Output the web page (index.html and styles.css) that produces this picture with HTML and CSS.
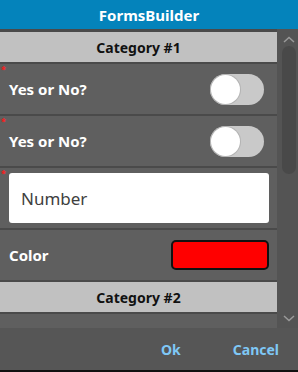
FILE: index.html
```html
<!DOCTYPE html>
<html>
<head>
<meta charset="utf-8">
<link rel="stylesheet" href="styles.css">
</head>
<body>
<div class="app">
  <header class="titlebar">FormsBuilder</header>
  <main class="body">
    <div class="content">
      <div class="category">Category #1</div>
      <div class="row">
        <span class="req">*</span>
        <span class="label">Yes or No?</span>
        <span class="toggle"><span class="knob"></span></span>
      </div>
      <div class="row">
        <span class="req">*</span>
        <span class="label">Yes or No?</span>
        <span class="toggle"><span class="knob"></span></span>
      </div>
      <div class="row row-input">
        <span class="req">*</span>
        <div class="input">Number</div>
      </div>
      <div class="row row-color">
        <span class="label">Color</span>
        <span class="swatch"></span>
      </div>
      <div class="category">Category #2</div>
      <div class="rest"></div>
    </div>
    <div class="scrollbar">
      <svg class="arrow" width="12" height="7" viewBox="0 0 12 7"><path d="M1 6 L6 1.5 L11 6" fill="none" stroke="#9a9a9a" stroke-width="1.5"/></svg>
      <div class="track"><div class="thumb"></div></div>
      <svg class="arrow" width="12" height="7" viewBox="0 0 12 7"><path d="M1 1 L6 5.5 L11 1" fill="none" stroke="#9a9a9a" stroke-width="1.5"/></svg>
    </div>
  </main>
  <footer class="footer">
    <span class="btn btn-ok">Ok</span>
    <span class="btn btn-cancel">Cancel</span>
  </footer>
</div>
</body>
</html>
```
FILE: styles.css
```css
html, body {
  margin: 0;
  padding: 0;
  background: #565656;
}
.app {
  width: 298px;
  height: 372px;
  display: flex;
  flex-direction: column;
  font-family: "Noto Sans", "Open Sans", sans-serif;
}
.titlebar {
  height: 29px;
  background: #0483bb;
  color: #ffffff;
  font-weight: bold;
  font-size: 15px;
  display: flex;
  align-items: center;
  justify-content: center;
}
.body {
  height: 299px;
  display: flex;
}
.content {
  width: 277px;
  background: #4a4a4a;
  padding-top: 3px;
  display: flex;
  flex-direction: column;
  gap: 2px;
  box-sizing: border-box;
}
.category {
  height: 30px;
  background: #c1c1c1;
  color: #111111;
  font-weight: bold;
  font-size: 14px;
  display: flex;
  align-items: center;
  justify-content: center;
}
.row {
  position: relative;
  height: 50px;
  background: #5f5f5f;
  display: flex;
  align-items: center;
  justify-content: space-between;
  padding: 0 13px 0 9px;
}
.req {
  position: absolute;
  left: 1px;
  top: 1px;
  color: #ff1a1a;
  font-size: 9px;
  font-weight: bold;
  line-height: 9px;
}
.label {
  color: #ffffff;
  font-weight: bold;
  font-size: 15px;
}
.toggle {
  width: 54px;
  height: 31px;
  border-radius: 16px;
  background: #c9c9c9;
  display: flex;
  align-items: center;
  padding-left: 1px;
  box-sizing: border-box;
}
.knob {
  width: 29px;
  height: 29px;
  border-radius: 50%;
  background: #ffffff;
  box-shadow: 0 0 0 1px #b4b4b4;
}
.row-input {
  height: 60px;
  padding: 0 8px 0 9px;
}
.input {
  flex: 1;
  height: 50px;
  background: #ffffff;
  border-radius: 3px;
  color: #404040;
  font-size: 17px;
  display: flex;
  align-items: center;
  padding-left: 12px;
}
.row-color {
  padding: 0 8px 0 9px;
}
.swatch {
  width: 98px;
  height: 30px;
  box-sizing: border-box;
  border: 2px solid #111111;
  border-radius: 5px;
  background: #ff0000;
}
.rest {
  flex: 1;
  background: #5f5f5f;
}
.scrollbar {
  width: 21px;
  background: #545454;
  display: flex;
  flex-direction: column;
  align-items: center;
  padding-top: 7px;
  box-sizing: border-box;
}
.arrow {
  flex: none;
  margin-left: 2px;
}
.track {
  height: 272px;
  width: 100%;
  padding-top: 3px;
  box-sizing: border-box;
  display: flex;
  justify-content: center;
}
.thumb {
  width: 14px;
  height: 128px;
  border-radius: 7px;
  background: #494949;
  margin-left: 2px;
}
.footer {
  height: 44px;
  background: #565656;
  border-bottom: 2px solid #111111;
  box-sizing: border-box;
  display: flex;
  align-items: center;
  justify-content: flex-end;
  padding-right: 19px;
  gap: 52px;
}
.btn {
  color: #7fc8f6;
  font-weight: bold;
  font-size: 14px;
}
```
